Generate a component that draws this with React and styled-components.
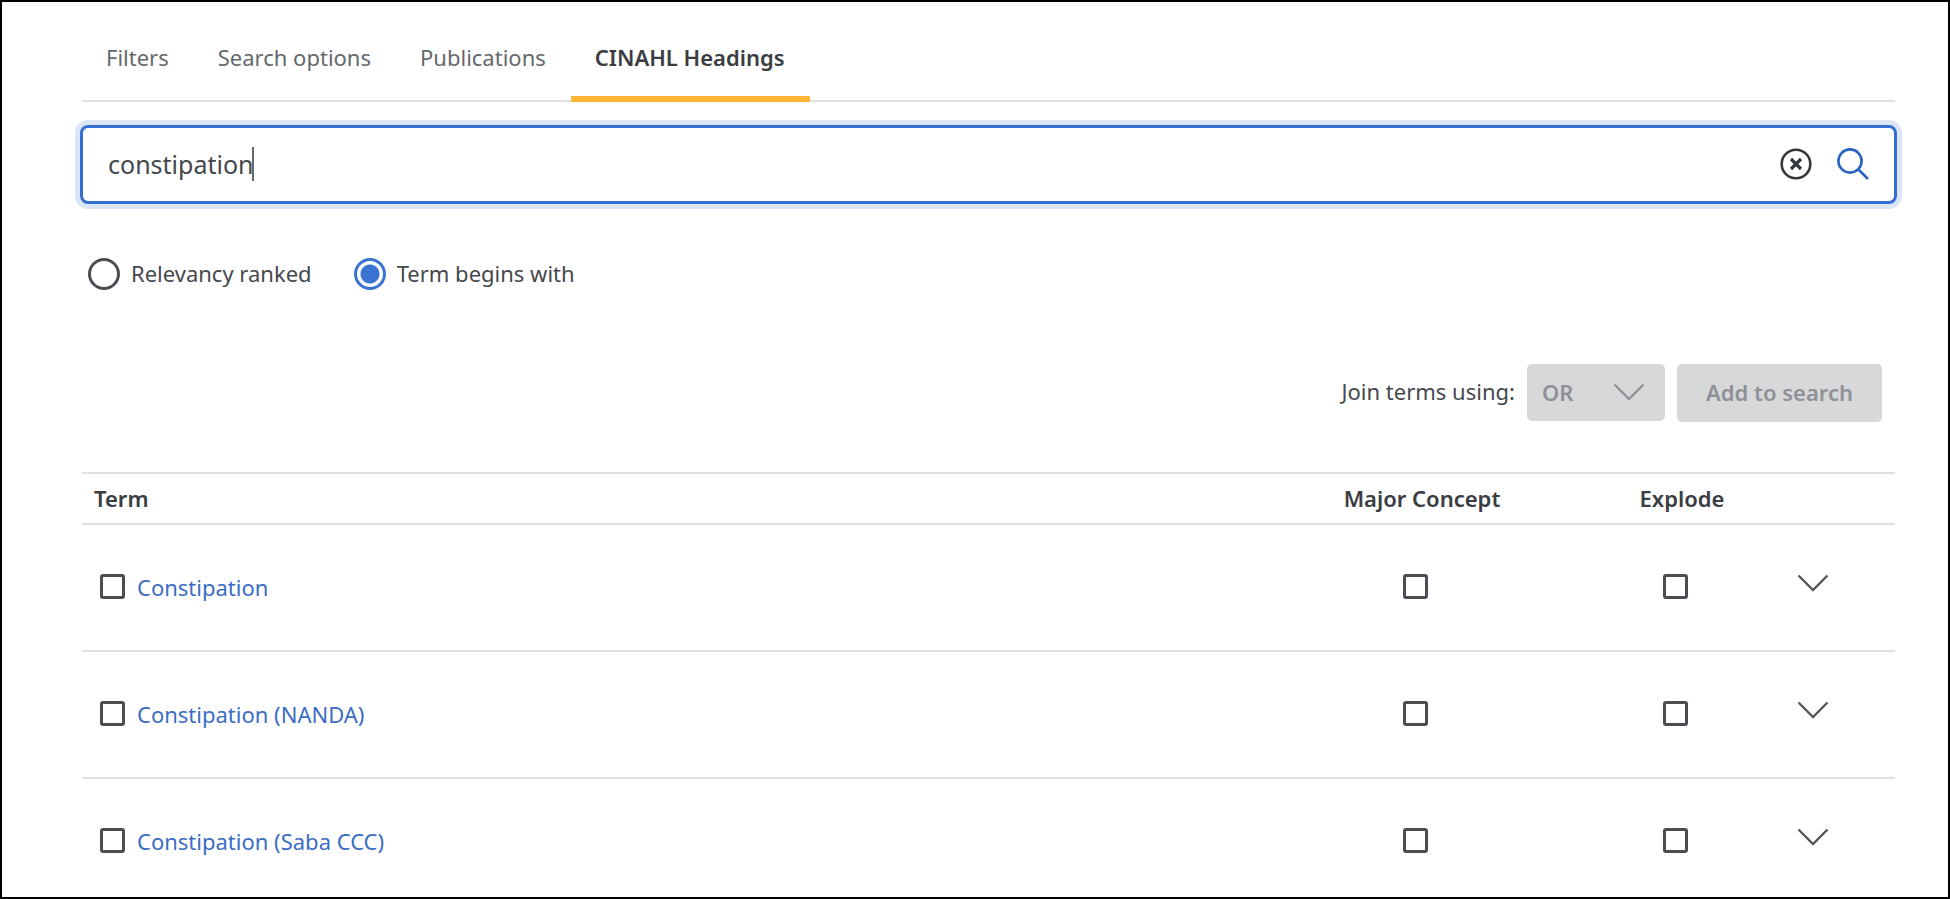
import React, { useState } from "react";
import styled, { createGlobalStyle, css } from "styled-components";

const GlobalStyle = createGlobalStyle`
  * {
    box-sizing: border-box;
  }
  body {
    margin: 0;
    background: #fff;
    color: #45484c;
    font-family: "Noto Sans", sans-serif;
    font-size: 22px;
    line-height: 30px;
  }
  button, input, select {
    font: inherit;
    color: inherit;
  }
`;

const Page = styled.div`
  height: 100vh;
  overflow: hidden;
  border: 2px solid #000;
  padding: 24px 53px 0 80px;
`;

const Tabs = styled.nav`
  display: flex;
  border-bottom: 2px solid #e0e0e0;
`;

const Tab = styled.button`
  height: 76px;
  margin-bottom: -2px;
  padding: 2px 25px 10px 24px;
  border: 0;
  border-bottom: 6px solid transparent;
  background: none;
  color: #65686c;
  cursor: pointer;

  ${({ $active }) =>
    $active &&
    css`
      border-color: #fdb534;
      color: #3a3d41;
      font-weight: 600;
    `}
`;

const SearchBox = styled.form`
  display: flex;
  align-items: center;
  gap: 25px;
  height: 79px;
  margin: 23px -2px 0;
  padding: 0 25px 2px;
  border: 3px solid #326fd1;
  border-radius: 8px;
  box-shadow: 0 0 0 5px #dbe5f6;
`;

const SearchField = styled.label`
  display: flex;
  flex: 1;
  align-items: center;
  min-width: 0;
  cursor: text;
`;

const SearchInput = styled.input`
  field-sizing: content;
  max-width: 100%;
  height: 60px;
  padding: 0;
  border: 0;
  outline: 0;
  background: none;
  caret-color: transparent;
  font-size: 25px;
`;

const Caret = styled.span`
  width: 2px;
  height: 34px;
  margin-left: -1px;
  background: #65686c;
`;

const IconButton = styled.button`
  display: inline-flex;
  padding: 0;
  border: 0;
  background: none;
  color: ${({ $color }) => $color || "#54575c"};
  cursor: pointer;
`;

const RadioGroup = styled.div`
  display: flex;
  gap: 42px;
  margin-top: 54px;
  padding-left: 6px;
`;

const RadioLabel = styled.label`
  display: flex;
  gap: 11px;
`;

const Radio = styled.input`
  appearance: none;
  width: 32px;
  height: 32px;
  margin: 0;
  border: 3px solid #4a4d52;
  border-radius: 50%;

  &:checked {
    border-color: #3a73d2;
    background: radial-gradient(circle, #3a73d2 9px, transparent 10px);
  }
`;

const Actions = styled.div`
  display: flex;
  justify-content: flex-end;
  gap: 12px;
  margin-top: 74px;
  padding-right: 13px;
`;

const JoinLabel = styled.label`
  line-height: 54px;
`;

const SelectWrap = styled.div`
  display: grid;
  align-items: center;
  width: 138px;
  height: 57px;
  border-radius: 5px;
  background: #d7d8da;
  color: #8e9196;

  > * {
    grid-area: 1 / 1;
  }
  > svg {
    justify-self: end;
    margin: 0 20px 2px 0;
    pointer-events: none;
  }
`;

const Select = styled.select`
  appearance: none;
  height: 57px;
  padding: 0 15px 2px;
  border: 0;
  background: none;
  font-weight: 600;
  opacity: 1;
`;

const AddButton = styled.button`
  height: 58px;
  padding: 0 29px 2px;
  border: 0;
  border-radius: 5px;
  background: #d7d8da;
  color: #8e9196;
  font-weight: 600;
`;

const Table = styled.table`
  width: 100%;
  margin-top: 50px;
  border-collapse: separate;
  border-spacing: 0;
  border-top: 2px solid #e0e0e0;
  table-layout: fixed;
`;

const HeadCell = styled.th`
  width: ${({ $width }) => $width || "auto"};
  height: 51px;
  padding: 0 12px 2px;
  border-bottom: 2px solid #e0e0e0;
  color: #3a3d41;
  font-weight: 600;
  text-align: ${({ $align }) => $align || "center"};
`;

const Cell = styled.td`
  height: 127px;
  padding: 0 14px 8px 0;
  border-bottom: 2px solid #e0e0e0;
  text-align: center;
`;

const TermCell = styled(Cell)`
  padding-bottom: 2px;
  padding-left: 18px;
  text-align: left;
`;

const ToggleCell = styled(Cell)`
  padding-right: 34px;
  padding-bottom: 10px;
`;

const TermRow = styled.div`
  display: flex;
  align-items: center;
  gap: 12px;
`;

const Checkbox = styled.input`
  appearance: none;
  width: 25px;
  height: 25px;
  margin: 0;
  border: 3px solid #4a4d52;
  border-radius: 3px;
  vertical-align: middle;

  &:checked {
    background: #3a73d2;
  }
`;

const TermLink = styled.a`
  color: #3c6dc4;
  text-decoration: none;
`;

const Chevron = () => (
  <svg width="32" height="18" viewBox="0 0 32 18" fill="none" aria-hidden="true">
    <path d="M1.5 1.5L16 16L30.5 1.5" stroke="currentColor" strokeWidth="2.4" />
  </svg>
);

const ClearIcon = () => (
  <svg width="32" height="32" viewBox="0 0 32 32" fill="none" aria-hidden="true">
    <circle cx="16" cy="16" r="14.3" stroke="currentColor" strokeWidth="2.6" />
    <path d="M11 11L21 21M21 11L11 21" stroke="currentColor" strokeWidth="3.2" />
  </svg>
);

const SearchIcon = () => (
  <svg width="32" height="32" viewBox="0 0 32 32" fill="none" aria-hidden="true">
    <circle cx="13" cy="13" r="11.6" stroke="currentColor" strokeWidth="2.6" />
    <path d="M21 21L31 31" stroke="currentColor" strokeWidth="2.6" />
  </svg>
);

const tabs = ["Filters", "Search options", "Publications", "CINAHL Headings"];
const modes = ["Relevancy ranked", "Term begins with"];
const terms = [
  "Constipation",
  "Constipation (NANDA)",
  "Constipation (Saba CCC)",
];

const App = () => {
  const [tab, setTab] = useState("CINAHL Headings");
  const [query, setQuery] = useState("constipation");
  const [mode, setMode] = useState("Term begins with");

  return (
    <Page>
      <GlobalStyle />
      <Tabs>
        {tabs.map((name) => (
          <Tab key={name} $active={name === tab} onClick={() => setTab(name)}>
            {name}
          </Tab>
        ))}
      </Tabs>
      <SearchBox onSubmit={(e) => e.preventDefault()}>
        <SearchField>
          <SearchInput
            aria-label="Search headings"
            autoFocus
            value={query}
            onChange={(e) => setQuery(e.target.value)}
          />
          <Caret />
        </SearchField>
        <IconButton
          type="button"
          aria-label="Clear"
          $color="#36393c"
          onClick={() => setQuery("")}
        >
          <ClearIcon />
        </IconButton>
        <IconButton type="submit" aria-label="Search" $color="#2a62c0">
          <SearchIcon />
        </IconButton>
      </SearchBox>
      <RadioGroup>
        {modes.map((name) => (
          <RadioLabel key={name}>
            <Radio
              type="radio"
              name="mode"
              checked={name === mode}
              onChange={() => setMode(name)}
            />
            {name}
          </RadioLabel>
        ))}
      </RadioGroup>
      <Actions>
        <JoinLabel htmlFor="join">Join terms using:</JoinLabel>
        <SelectWrap>
          <Select id="join" disabled>
            <option>OR</option>
            <option>AND</option>
          </Select>
          <Chevron />
        </SelectWrap>
        <AddButton disabled>Add to search</AddButton>
      </Actions>
      <Table>
        <thead>
          <tr>
            <HeadCell $align="left">Term</HeadCell>
            <HeadCell $width="354px">Major Concept</HeadCell>
            <HeadCell $width="166px">Explode</HeadCell>
            <HeadCell $width="130px" />
          </tr>
        </thead>
        <tbody>
          {terms.map((term) => (
            <tr key={term}>
              <TermCell>
                <TermRow>
                  <Checkbox type="checkbox" aria-label={`Select ${term}`} />
                  <TermLink href="#">{term}</TermLink>
                </TermRow>
              </TermCell>
              <Cell>
                <Checkbox type="checkbox" aria-label={`${term}: major concept`} />
              </Cell>
              <Cell>
                <Checkbox type="checkbox" aria-label={`${term}: explode`} />
              </Cell>
              <ToggleCell>
                <IconButton aria-label={`Show details for ${term}`}>
                  <Chevron />
                </IconButton>
              </ToggleCell>
            </tr>
          ))}
        </tbody>
      </Table>
    </Page>
  );
};

export default App;
